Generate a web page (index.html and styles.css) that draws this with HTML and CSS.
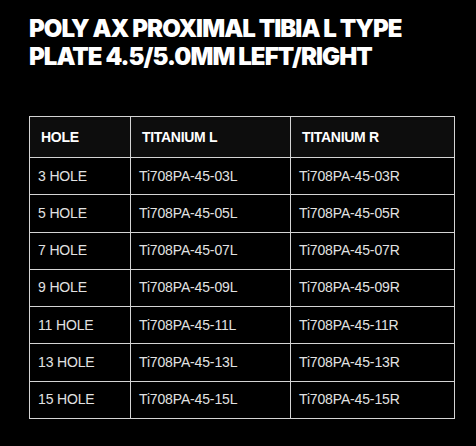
FILE: index.html
```html
<!DOCTYPE html>
<html>
<head>
<meta charset="utf-8">
<link rel="stylesheet" href="styles.css">
</head>
<body>
<div class="page">
  <h1 class="title">POLY AX PROXIMAL TIBIA L TYPE PLATE 4.5/5.0MM LEFT/RIGHT</h1>
  <table class="spec">
    <colgroup>
      <col class="c1"><col class="c2"><col class="c3">
    </colgroup>
    <thead>
      <tr><th>HOLE</th><th>TITANIUM L</th><th>TITANIUM R</th></tr>
    </thead>
    <tbody>
      <tr><td>3 HOLE</td><td>Ti708PA-45-03L</td><td>Ti708PA-45-03R</td></tr>
      <tr><td>5 HOLE</td><td>Ti708PA-45-05L</td><td>Ti708PA-45-05R</td></tr>
      <tr><td>7 HOLE</td><td>Ti708PA-45-07L</td><td>Ti708PA-45-07R</td></tr>
      <tr><td>9 HOLE</td><td>Ti708PA-45-09L</td><td>Ti708PA-45-09R</td></tr>
      <tr><td>11 HOLE</td><td>Ti708PA-45-11L</td><td>Ti708PA-45-11R</td></tr>
      <tr><td>13 HOLE</td><td>Ti708PA-45-13L</td><td>Ti708PA-45-13R</td></tr>
      <tr><td>15 HOLE</td><td>Ti708PA-45-15L</td><td>Ti708PA-45-15R</td></tr>
    </tbody>
  </table>
</div>
</body>
</html>
```
FILE: styles.css
```css
html, body {
  margin: 0;
  padding: 0;
  background: #000;
}
.page {
  padding: 15px 22px 0 29px;
}
.title {
  margin: 0 0 45px 0;
  font-family: Inter, "Liberation Sans", sans-serif;
  font-weight: 900;
  font-size: 24px;
  line-height: 28px;
  letter-spacing: -0.95px;
  color: #fff;
  width: 410px;
}
.spec {
  border-collapse: collapse;
  width: 425px;
  table-layout: fixed;
  font-family: "Liberation Sans", Arial, sans-serif;
  font-size: 14px;
  letter-spacing: -0.15px;
}
.c1 { width: 101px; }
.c2 { width: 160px; }
.c3 { width: 164px; }
.spec th, .spec td {
  border: 1px solid #d4d4d4;
  text-align: left;
  line-height: 21px;
}
.spec th {
  background: #0d0d0d;
  color: #fff;
  font-weight: 700;
  letter-spacing: -0.3px;
  padding: 9.5px 11px;
}
.spec td {
  color: #e2e2e2;
  padding: 7.65px 8px;
}
```
